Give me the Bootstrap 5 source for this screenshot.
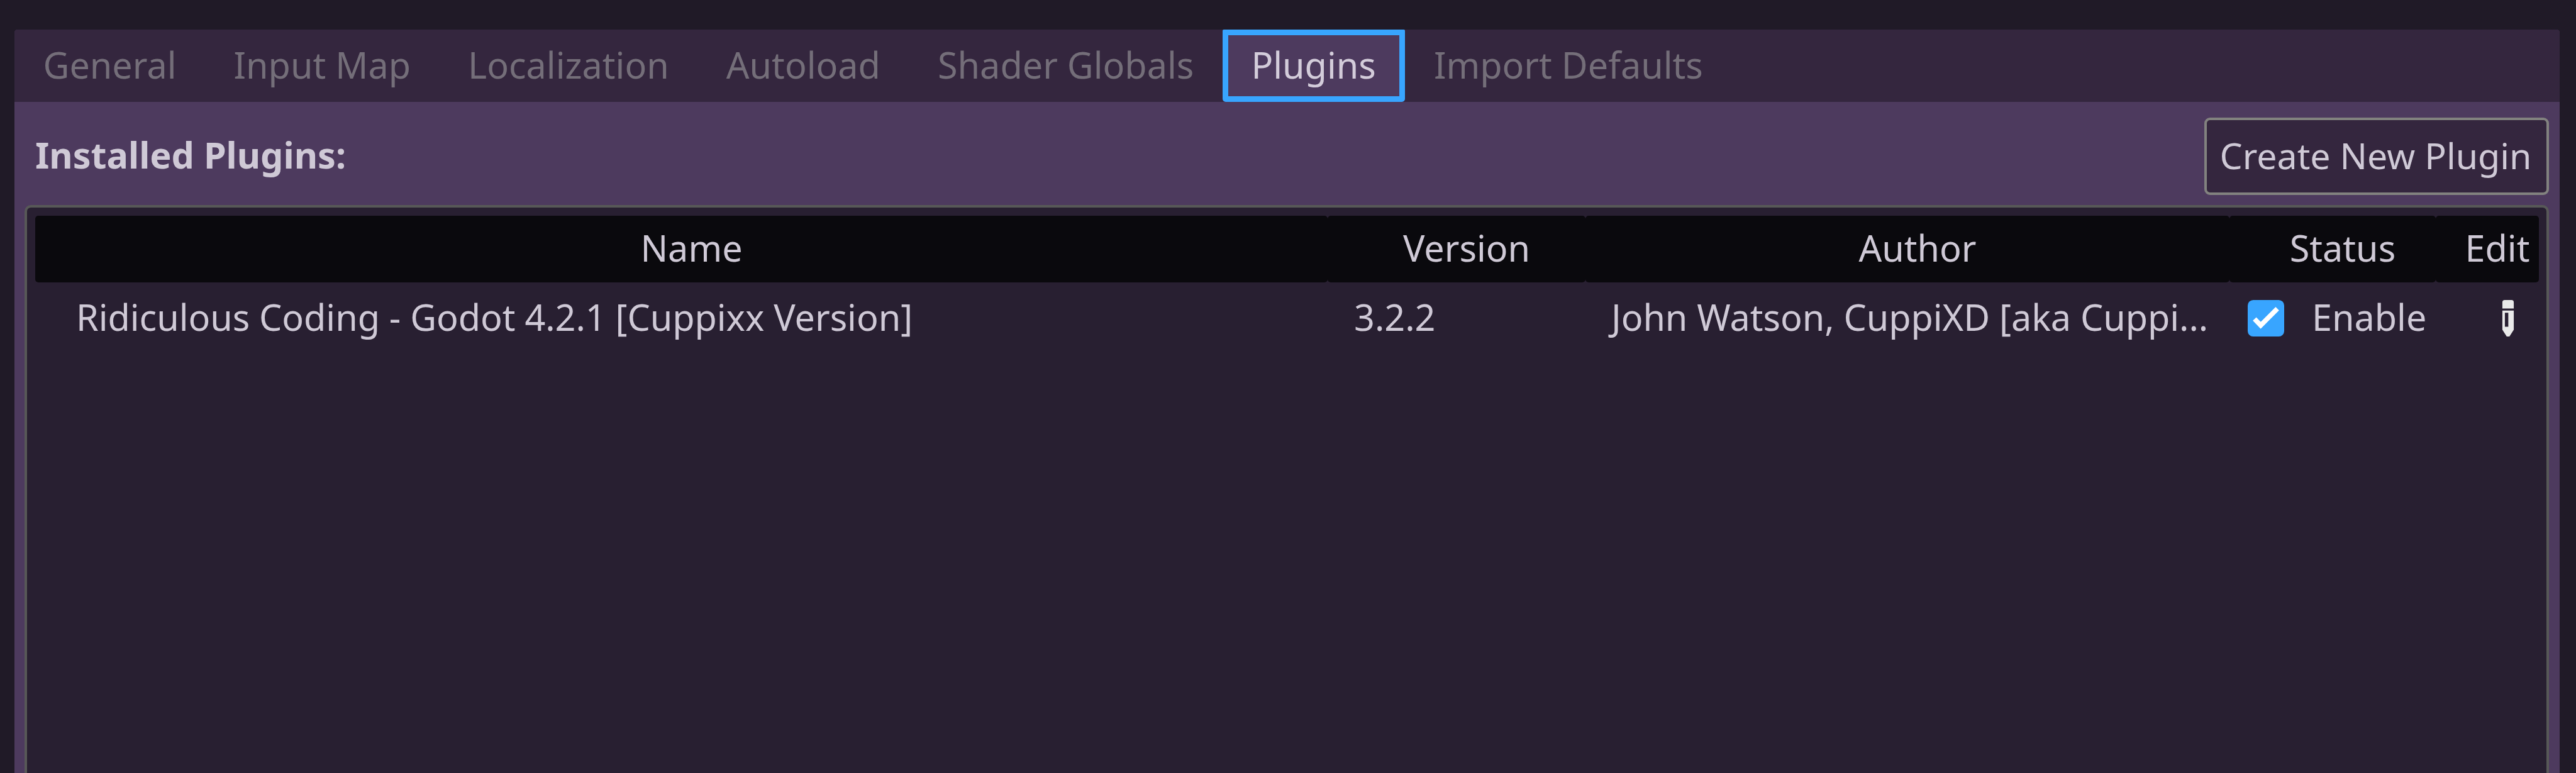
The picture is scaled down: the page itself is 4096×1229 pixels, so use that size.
<!DOCTYPE html>
<html lang="en">
<head>
<meta charset="utf-8">
<title>Project Settings - Plugins</title>
<link rel="stylesheet" href="https://cdn.jsdelivr.net/npm/bootstrap@5.3.0/dist/css/bootstrap.min.css">
<style>
  body { background: #201a27; color: #cfc9d6; font-family: "Noto Sans", sans-serif; font-size: 57.5px; line-height: 76px; height: 1229px; overflow: hidden; }
  .settings-panel { height: 1229px; padding: 47px 26px 0 23px; }
  .panel-body { background: #4d3a5e; border-radius: 5px 5px 0 0; }

  .tab-strip { background: #34263e; height: 115px; border-radius: 5px 5px 0 0; }
  .tab-strip .nav-link { color: #746e79; height: 115px; padding: 18px 45.55px 0; line-height: 76px; border: 0; border-radius: 0; white-space: nowrap; }
  .tab-strip .nav-link.active { color: #d3ccda; background: #4d3a5e; box-shadow: inset 0 0 0 9px #38a5ff; border-radius: 2px 2px 5px 5px; padding-right: 46.5px; }

  .title-row { height: 164px; padding: 25px 17px 0 33px; }
  .section-title { padding-top: 21px; }
  .create-btn { --bs-btn-color: #cfc9d6; --bs-btn-bg: #34263e; --bs-btn-border-color: #82827f; width: 548px; height: 123px; border-width: 4px; border-radius: 9px; font-size: 57.3px; line-height: 76px; padding: 0 3px 3px 0; white-space: nowrap; }

  .plugin-tree { margin: 0 17px 0 16px; background: #281f31; border: 4px solid #575857; border-bottom: 0; border-radius: 10px 10px 0 0; padding: 13px 12px 0 13px; }
  .tree-line { display: grid; grid-template-columns: 2055px 410px 1024px 328px 164px; }
  .tree-head > div { background: #0a090d; height: 106px; border-radius: 5px; text-align: center; padding: 13px 0 0 32px; white-space: nowrap; }
  .tree-item > div { height: 112px; padding-top: 17px; white-space: nowrap; }
  .tree-item .cell-name { padding-left: 65px; letter-spacing: -.05px; }
  .tree-item .cell-version { padding-left: 42px; }
  .tree-item .cell-author { padding-left: 41px; letter-spacing: -.05px; }
  .tree-item .cell-status { padding-left: 29px; gap: 44px; }
  .tree-item .cell-edit { padding-left: 86px; }
  .tree-item svg { width: 58px; height: 58px; margin-top: 11px; flex: none; display: block; }
</style>
</head>
<body>
<main class="settings-panel d-flex flex-column">
  <section class="panel-body flex-grow-1 d-flex flex-column">
    <ul class="nav nav-tabs tab-strip border-0 flex-nowrap">
      <li class="nav-item"><a class="nav-link">General</a></li>
      <li class="nav-item"><a class="nav-link">Input Map</a></li>
      <li class="nav-item"><a class="nav-link">Localization</a></li>
      <li class="nav-item"><a class="nav-link">Autoload</a></li>
      <li class="nav-item"><a class="nav-link">Shader Globals</a></li>
      <li class="nav-item"><a class="nav-link active">Plugins</a></li>
      <li class="nav-item"><a class="nav-link">Import Defaults</a></li>
    </ul>
    <div class="title-row d-flex justify-content-between align-items-start">
      <span class="section-title fw-bold">Installed Plugins:</span>
      <button type="button" class="btn create-btn">Create New Plugin</button>
    </div>
    <div class="plugin-tree flex-grow-1">
      <div class="tree-line tree-head">
        <div>Name</div>
        <div>Version</div>
        <div>Author</div>
        <div>Status</div>
        <div>Edit</div>
      </div>
      <div class="tree-line tree-item">
        <div class="cell-name">Ridiculous Coding - Godot 4.2.1 [Cuppixx Version]</div>
        <div class="cell-version">3.2.2</div>
        <div class="cell-author">John Watson, CuppiXD [aka Cuppi...</div>
        <div class="cell-status d-flex align-items-start">
          <svg viewBox="0 0 16 16" aria-hidden="true">
            <rect width="16" height="16" rx="2.4" fill="#38a5ff"/>
            <path d="M3 8.3 5.7 11.1 13 3.8" fill="none" stroke="#fff" stroke-width="2.1"/>
          </svg>
          <span>Enable</span>
        </div>
        <div class="cell-edit">
          <svg viewBox="0 0 16 16" aria-hidden="true">
            <path fill="#e9e9e9" d="M6.5 0h3a1 1 0 0 1 1 1v2.7h-5V1a1 1 0 0 1 1-1z"/>
            <path fill="#e9e9e9" fill-rule="evenodd" d="M5.5 4.6h5V13L8.6 16H7.4L5.5 13zM6.6 5.6v6.1h1.5V5.6z"/>
          </svg>
        </div>
      </div>
    </div>
  </section>
</main>
<script src="https://cdn.jsdelivr.net/npm/bootstrap@5.3.0/dist/js/bootstrap.bundle.min.js"></script>
</body>
</html>
